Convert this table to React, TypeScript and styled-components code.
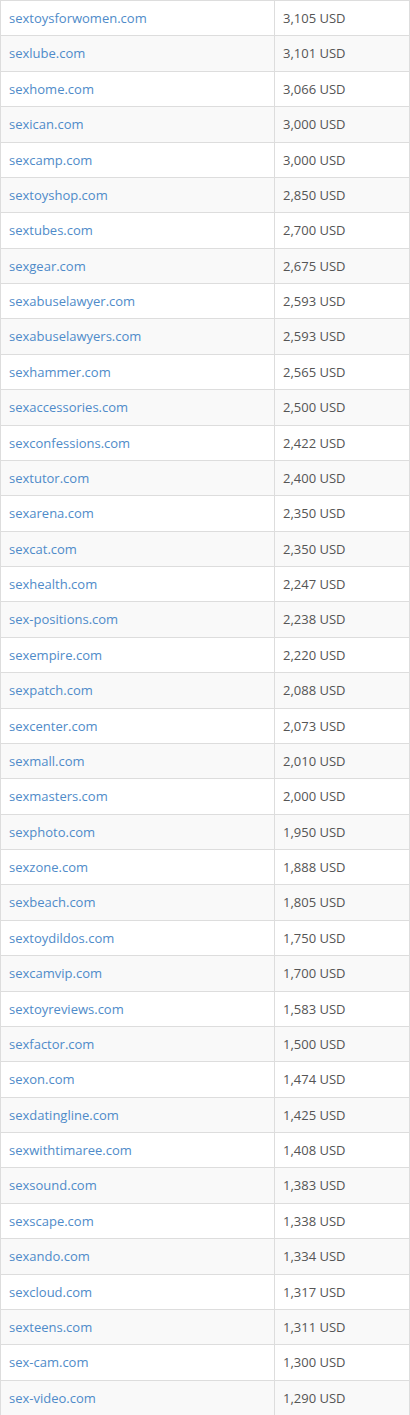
import React from "react";
import styled, { createGlobalStyle } from "styled-components";

const Global = createGlobalStyle`
  html, body { margin: 0; padding: 0; background: #ffffff; }
  body { font-family: "Open Sans", "Liberation Sans", sans-serif; }
`;

const Table = styled.table`
  width: 410px;
  border-collapse: collapse;
  font-family: "Open Sans", "Liberation Sans", sans-serif;
  font-size: 13px;
  color: #555555;
`;

const Row = styled.tr<{ $striped: boolean }>`
  background: ${(p) => (p.$striped ? "#f9f9f9" : "#ffffff")};
`;

const Cell = styled.td<{ $w?: string }>`
  border: 1px solid #dddddd;
  padding: 8px 8px;
  line-height: 18.375px;
  width: ${(p) => p.$w ?? "auto"};
  white-space: nowrap;
`;

const Domain = styled.a`
  color: #4f8bc9;
  text-decoration: none;
`;

const data: [string, string][] = [
  ["sextoysforwomen.com", "3,105"],
  ["sexlube.com", "3,101"],
  ["sexhome.com", "3,066"],
  ["sexican.com", "3,000"],
  ["sexcamp.com", "3,000"],
  ["sextoyshop.com", "2,850"],
  ["sextubes.com", "2,700"],
  ["sexgear.com", "2,675"],
  ["sexabuselawyer.com", "2,593"],
  ["sexabuselawyers.com", "2,593"],
  ["sexhammer.com", "2,565"],
  ["sexaccessories.com", "2,500"],
  ["sexconfessions.com", "2,422"],
  ["sextutor.com", "2,400"],
  ["sexarena.com", "2,350"],
  ["sexcat.com", "2,350"],
  ["sexhealth.com", "2,247"],
  ["sex-positions.com", "2,238"],
  ["sexempire.com", "2,220"],
  ["sexpatch.com", "2,088"],
  ["sexcenter.com", "2,073"],
  ["sexmall.com", "2,010"],
  ["sexmasters.com", "2,000"],
  ["sexphoto.com", "1,950"],
  ["sexzone.com", "1,888"],
  ["sexbeach.com", "1,805"],
  ["sextoydildos.com", "1,750"],
  ["sexcamvip.com", "1,700"],
  ["sextoyreviews.com", "1,583"],
  ["sexfactor.com", "1,500"],
  ["sexon.com", "1,474"],
  ["sexdatingline.com", "1,425"],
  ["sexwithtimaree.com", "1,408"],
  ["sexsound.com", "1,383"],
  ["sexscape.com", "1,338"],
  ["sexando.com", "1,334"],
  ["sexcloud.com", "1,317"],
  ["sexteens.com", "1,311"],
  ["sex-cam.com", "1,300"],
  ["sex-video.com", "1,290"],
];

export default function App() {
  return (
    <>
      <Global />
      <Table>
        <tbody>
          {data.map(([d, p], i) => (
            <Row key={d} $striped={i % 2 === 1}>
              <Cell $w="257px">
                <Domain href="#">{d}</Domain>
              </Cell>
              <Cell>{p} USD</Cell>
            </Row>
          ))}
        </tbody>
      </Table>
    </>
  );
}
